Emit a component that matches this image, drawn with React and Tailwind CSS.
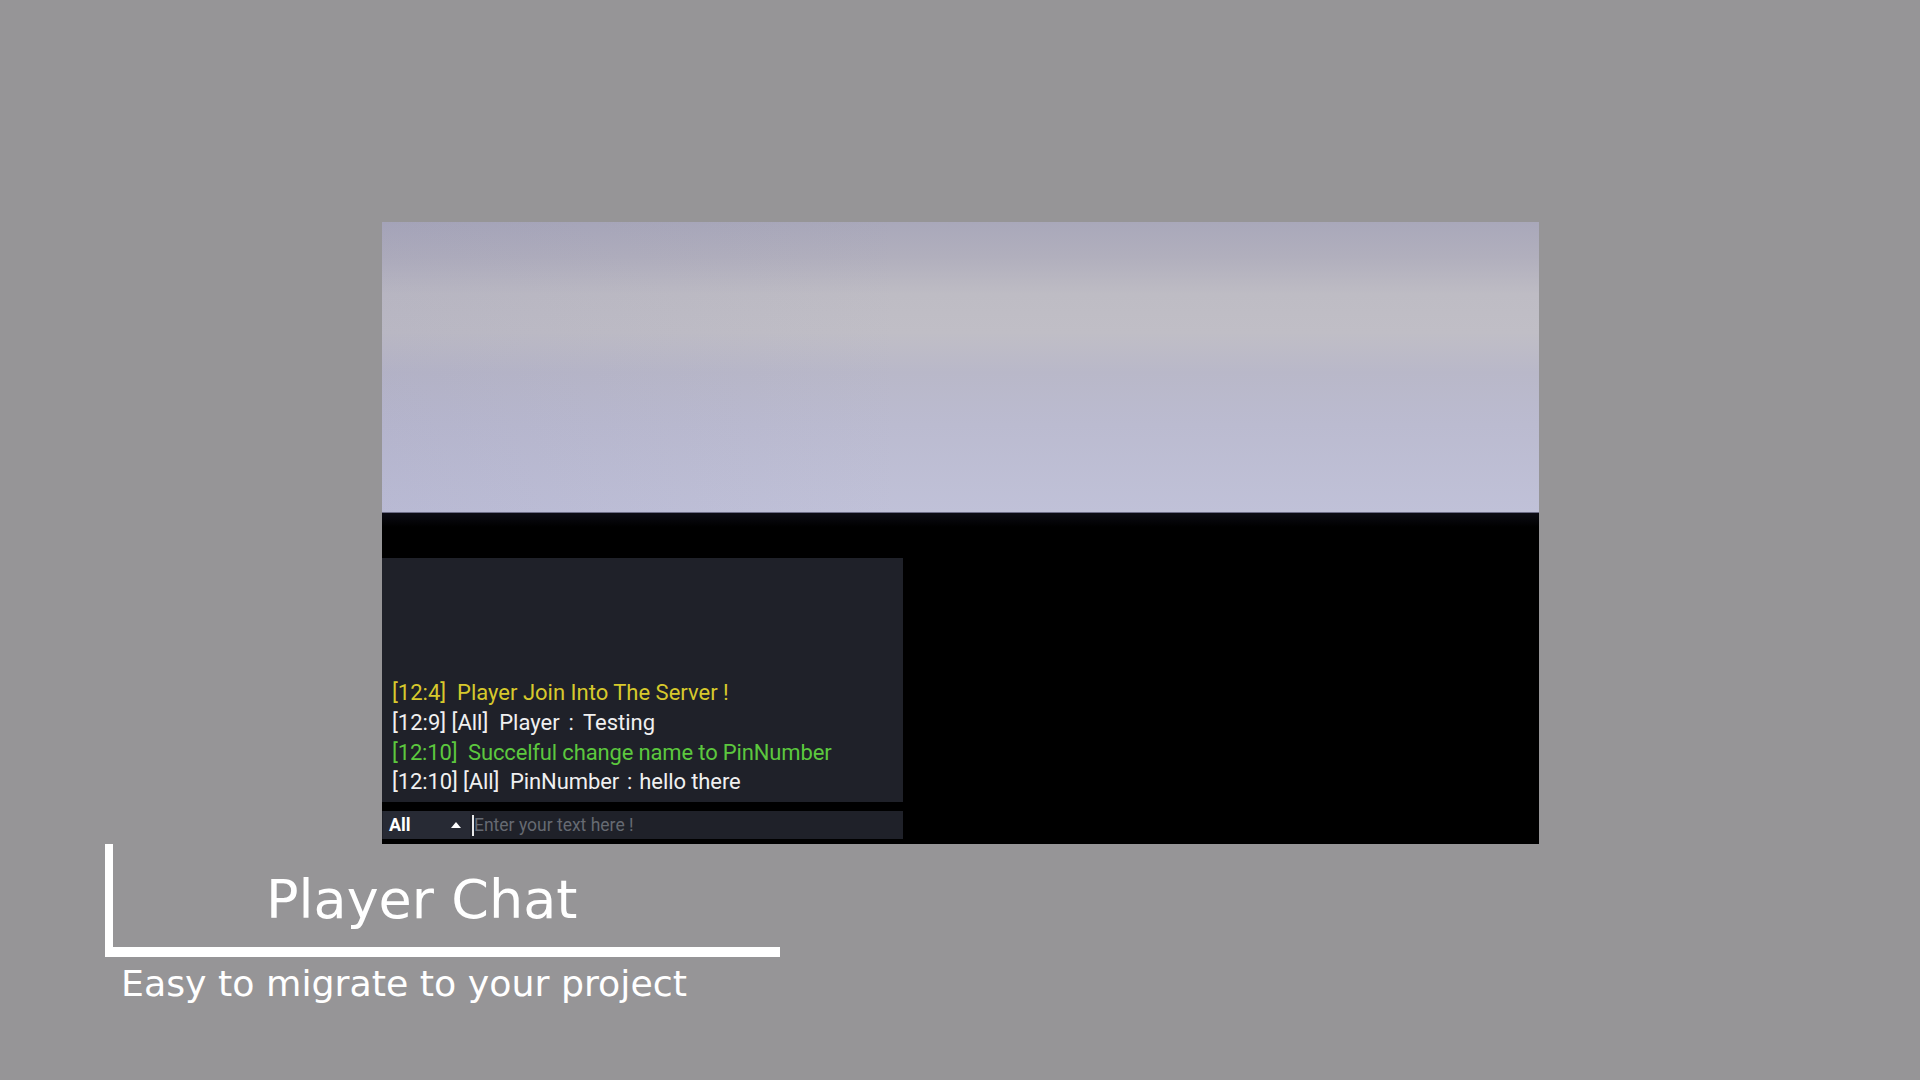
import React from "react";

export default function App() {
  const roboto = { fontFamily: 'Roboto, "Liberation Sans", sans-serif' };
  return (
    <div className="w-[1920px] h-[1080px] bg-[#969597] overflow-hidden flex flex-col">
      {/* Game frame */}
      <div className="ml-[382px] mt-[222px] w-[1157px] h-[622px] flex flex-col">
        <div className="h-[291px] bg-[linear-gradient(90deg,rgba(120,120,170,0.10)_0%,rgba(0,0,0,0)_45%),linear-gradient(180deg,#a9a8ba_0%,#b1afbd_12%,#bebcc4_25%,#c0bec6_38%,#b9b8c9_52%,#bbbbd0_70%,#c0c1d8_100%)] border-b border-[#6d6d86]"></div>
        <div className="flex-1 bg-[linear-gradient(180deg,#0c0c14_0px,#000000_14px)] pt-[45px] flex flex-col" style={roboto}>
          <div className="w-[521px] h-[244px] bg-[#1f2129] flex flex-col justify-end pl-[10px] pb-[5px] text-[22px] leading-[29.7px] whitespace-pre">
            <div className="text-[#d7c92c]">[12:4]  Player Join Into The Server !</div>
            <div className="text-[#f0f0f0]">[12:9] [All]  Player<span className="mx-[9px]">:</span>Testing</div>
            <div className="text-[#5cc83e] tracking-[-0.15px]">[12:10]  Succelful change name to PinNumber</div>
            <div className="text-[#f0f0f0] tracking-[-0.1px]">[12:10] [All]  PinNumber<span className="ml-[8px] mr-[7px]">:</span>hello there</div>
          </div>
          <div className="mt-[9px] w-[521px] h-[28px] bg-[#1f2129] flex items-center">
            <div className="ml-[1px] w-[87px] h-[28px] bg-[#272a34] flex items-center justify-between pl-[6px] pr-[9px]">
              <span className="text-white font-bold text-[18px] leading-[28px]">All</span>
              <svg width="10" height="6" viewBox="0 0 10 6" className="mt-[-1px]">
                <polygon points="5,0 10,6 0,6" fill="#ffffff" />
              </svg>
            </div>
            <div className="ml-[2px] w-[2px] h-[21px] bg-[#e8e8e8]"></div>
            <span className="text-[#666a72] text-[17.5px] leading-[28px]">Enter your text here !</span>
          </div>
        </div>
      </div>

      {/* Caption */}
      <div className="ml-[105px] w-[675px] h-[113px] border-l-[8px] border-b-[10px] border-white pt-[29px] pl-[153px]">
        <div className="text-white text-[54px] leading-none" style={{ fontFamily: '"DejaVu Sans", sans-serif' }}>Player Chat</div>
      </div>
      <div className="ml-[121px] mt-[9px] text-white text-[36.3px] leading-none" style={{ fontFamily: '"DejaVu Sans", sans-serif' }}>
        Easy to migrate to your project
      </div>
    </div>
  );
}
